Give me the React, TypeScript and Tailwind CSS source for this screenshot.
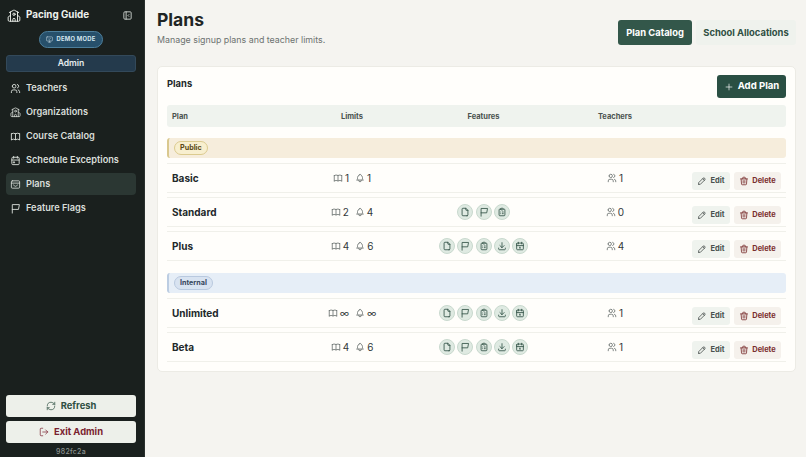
import { LogOut, MonitorCheck, Plus, RefreshCw, School } from "lucide-react";
import {
  TbBell,
  TbBook,
  TbCalendar,
  TbCalendarEvent,
  TbClipboardList,
  TbDownload,
  TbFile,
  TbLayoutSidebarLeftCollapse,
  TbPencil,
  TbTrash,
  TbUsers,
} from "react-icons/tb";

function ArchiveIcon({ className }: { className?: string }) {
  return (
    <svg viewBox="0 0 24 24" fill="none" stroke="currentColor" strokeWidth={1.8} strokeLinecap="round" strokeLinejoin="round" className={className}>
      <rect x="3" y="4" width="18" height="16" rx="2" />
      <path d="M3 9h18" />
      <path d="M8 13c1 2.2 2.4 3 4 3s3-.8 4-3" />
    </svg>
  );
}

function FlagIcon({ className }: { className?: string }) {
  return (
    <svg viewBox="0 0 24 24" fill="none" stroke="currentColor" strokeWidth={2} strokeLinecap="round" strokeLinejoin="round" className={className}>
      <path d="M5 22V3.5h15.5l-2 10.5H5" />
    </svg>
  );
}

function OrgIcon({ className }: { className?: string }) {
  return <School className={className} strokeWidth={1.7} />;
}

const NAV = [
  { label: "Teachers", icon: TbUsers },
  { label: "Organizations", icon: OrgIcon },
  { label: "Course Catalog", icon: TbBook },
  { label: "Schedule Exceptions", icon: TbCalendarEvent },
  { label: "Plans", icon: ArchiveIcon, active: true },
  { label: "Feature Flags", icon: FlagIcon },
];

const FEATURE_ICONS = [TbFile, FlagIcon, TbClipboardList, TbDownload, TbCalendar];

type Plan = {
  name: string;
  courses: string;
  alerts: string;
  features: number;
  teachers: number;
};

const PUBLIC_PLANS: Plan[] = [
  { name: "Basic", courses: "1", alerts: "1", features: 0, teachers: 1 },
  { name: "Standard", courses: "2", alerts: "4", features: 3, teachers: 0 },
  { name: "Plus", courses: "4", alerts: "6", features: 5, teachers: 4 },
];

const INTERNAL_PLANS: Plan[] = [
  { name: "Unlimited", courses: "∞", alerts: "∞", features: 5, teachers: 1 },
  { name: "Beta", courses: "4", alerts: "6", features: 5, teachers: 1 },
];

const COLS = "grid grid-cols-[119px_132px_131px_132px_105px] items-center";

function PlanRow({ plan }: { plan: Plan }) {
  return (
    <div className={`${COLS} h-[30px] border-y border-[#f0f0ea]`}>
      <span className="pl-[5px] text-[10px] font-bold text-[#22282a]">{plan.name}</span>
      <div className="flex items-center justify-center gap-[6px] text-[10px] text-[#33393a]">
        <span className="flex items-center gap-[2px]">
          <TbBook className="w-[10px] h-[10px] text-[#6a716f]" />
          {plan.courses}
        </span>
        <span className="flex items-center gap-[2px]">
          <TbBell className="w-[10px] h-[10px] text-[#6a716f]" />
          {plan.alerts}
        </span>
      </div>
      <div className="flex items-center justify-center gap-[2.3px]">
        {FEATURE_ICONS.slice(0, plan.features).map((Icon, i) => (
          <span
            key={i}
            className="w-[16px] h-[16px] rounded-full bg-[#dfeae2] border border-[#c9d9ce] flex items-center justify-center text-[#2f4f43]"
          >
            <Icon className="w-[10px] h-[10px]" />
          </span>
        ))}
      </div>
      <div className="flex items-center justify-center gap-[2px] text-[10px] text-[#33393a]">
        <TbUsers className="w-[10px] h-[10px] text-[#6a716f]" />
        {plan.teachers}
      </div>
      <div className="flex items-center justify-end gap-[4px] pr-[5px] pt-[5px]">
        <button className="h-[18px] w-[38px] rounded-[3px] bg-[#eff3ee] flex items-center justify-center gap-[3px] text-[7.5px] font-bold text-[#4a524f]">
          <TbPencil className="w-[10px] h-[10px]" />
          Edit
        </button>
        <button className="h-[18px] w-[47px] rounded-[3px] bg-[#f5f1ec] flex items-center justify-center gap-[3px] text-[7.5px] font-bold text-[#7a2e2e]">
          <TbTrash className="w-[10px] h-[10px]" />
          Delete
        </button>
      </div>
    </div>
  );
}

export default function App() {
  return (
    <div className="flex h-[457px] w-[806px] overflow-hidden bg-[#f5f4f0] font-['Inter',sans-serif]">
      {/* Sidebar */}
      <aside className="w-[145px] shrink-0 bg-[#1a201e] border-r border-[#2a302e] flex flex-col pl-[6px] pr-[8px]">
        <div className="flex items-center h-[31px] pl-[1px] pr-[3px] text-[#eef1ec]">
          <School className="w-[14px] h-[14px] mr-[5px]" strokeWidth={1.6} />
          <span className="text-[9.8px] font-bold">Pacing Guide</span>
          <TbLayoutSidebarLeftCollapse className="w-[11px] h-[11px] ml-auto text-[#cfd4d0]" />
        </div>
        <div className="flex justify-center">
          <span className="h-[17px] w-[64px] rounded-full bg-[#27506b] border border-[#4d7f9c] flex items-center justify-center gap-[3px] text-[5.8px] font-bold tracking-[0.05em] text-[#d6e6ee]">
            <MonitorCheck className="w-[7px] h-[7px]" strokeWidth={1.7} />
            DEMO MODE
          </span>
        </div>
        <div className="mt-[7px] h-[17px] rounded-[3px] bg-[#243a4c] border border-[#33495a] flex items-center justify-center text-[8.6px] font-semibold text-[#e6ecee]">
          Admin
        </div>
        <nav className="mt-[5px] flex flex-col gap-[2px]">
          {NAV.map(({ label, icon: Icon, active }) => (
            <div
              key={label}
              className={`h-[22px] flex items-center gap-[5px] pl-[4px] rounded-[4px] text-[9.2px] font-semibold text-[#d9ded9] ${active ? "bg-[#2b3733]" : ""}`}
            >
              <Icon className="w-[11px] h-[11px]" />
              {label}
            </div>
          ))}
        </nav>
        <div className="mt-auto flex flex-col gap-[4px]">
          <button className="h-[22px] rounded-[3px] bg-[#edf0ea] flex items-center justify-center gap-[5px] text-[9.4px] font-bold text-[#2f4f43]">
            <RefreshCw className="w-[10px] h-[10px]" strokeWidth={1.7} />
            Refresh
          </button>
          <button className="h-[22px] rounded-[3px] bg-[#edf0ea] flex items-center justify-center gap-[5px] text-[9.4px] font-bold text-[#7a2230]">
            <LogOut className="w-[10px] h-[10px] -scale-x-100 rotate-180" strokeWidth={1.7} />
            Exit Admin
          </button>
          <div className="h-[10px] flex items-center justify-center text-[7px] font-medium tracking-[0.04em] text-[#8c928f]">
            982fc2a
          </div>
        </div>
      </aside>

      {/* Main */}
      <main className="flex-1 pl-[12px] pr-[10px]">
        <header className="h-[66px] flex items-start justify-between">
          <div className="pt-[8px]">
            <h1 className="text-[17.5px] leading-[23px] font-bold text-[#1f2524]">Plans</h1>
            <p className="mt-[2px] text-[8.85px] text-[#6d7371]">Manage signup plans and teacher limits.</p>
          </div>
          <div className="mt-[20px] flex gap-[4px]">
            <button className="h-[25px] w-[74px] pt-[1px] rounded-[3px] bg-[#33574a] text-[9.4px] font-bold text-white">
              Plan Catalog
            </button>
            <button className="h-[25px] w-[100px] pt-[1px] rounded-[3px] bg-[#eff2ed] text-[9.4px] font-bold text-[#2f4f43]">
              School Allocations
            </button>
          </div>
        </header>

        <section className="h-[306px] rounded-[5px] bg-[#fffefb] border border-[#ecebe5] pt-[8px] px-[9px]">
          <div className="flex items-center justify-between h-[23px]">
            <h2 className="text-[9.4px] font-bold text-[#22282a] -mt-[5px]">Plans</h2>
            <button className="h-[23px] w-[69px] rounded-[3px] bg-[#2a4f43] flex items-center justify-center gap-[4px] text-[9.6px] font-bold text-white">
              <Plus className="w-[10px] h-[10px]" strokeWidth={1.6} />
              Add Plan
            </button>
          </div>

          <div className={`${COLS} mt-[7px] h-[22px] pt-[1px] rounded-[3px] bg-[#eff3ee] text-[7.5px] font-bold text-[#4a524f]`}>
            <span className="pl-[5px]">Plan</span>
            <span className="text-center">Limits</span>
            <span className="text-center">Features</span>
            <span className="text-center">Teachers</span>
            <span />
          </div>

          <div className="mt-[11px] h-[20px] rounded-[3px] bg-[#f6eddc] border-l-[2px] border-[#d9c88e] flex items-center pl-[5px]">
            <span className="h-[14px] px-[5px] rounded-full bg-[#f8efcf] border border-[#dccb8f] flex items-center text-[7.2px] font-bold text-[#5b4a16]">
              Public
            </span>
          </div>
          <div className="mt-[5px] flex flex-col gap-[4px]">
            {PUBLIC_PLANS.map((p) => (
              <PlanRow key={p.name} plan={p} />
            ))}
          </div>

          <div className="mt-[12px] h-[20px] rounded-[3px] bg-[#e6eef7] border-l-[2px] border-[#bccde2] flex items-center pl-[5px]">
            <span className="h-[14px] px-[5px] rounded-full bg-[#d8e3f1] border border-[#b9c9df] flex items-center text-[7.2px] font-bold text-[#39485e]">
              Internal
            </span>
          </div>
          <div className="mt-[5px] flex flex-col gap-[4px]">
            {INTERNAL_PLANS.map((p) => (
              <PlanRow key={p.name} plan={p} />
            ))}
          </div>
        </section>
      </main>
    </div>
  );
}
